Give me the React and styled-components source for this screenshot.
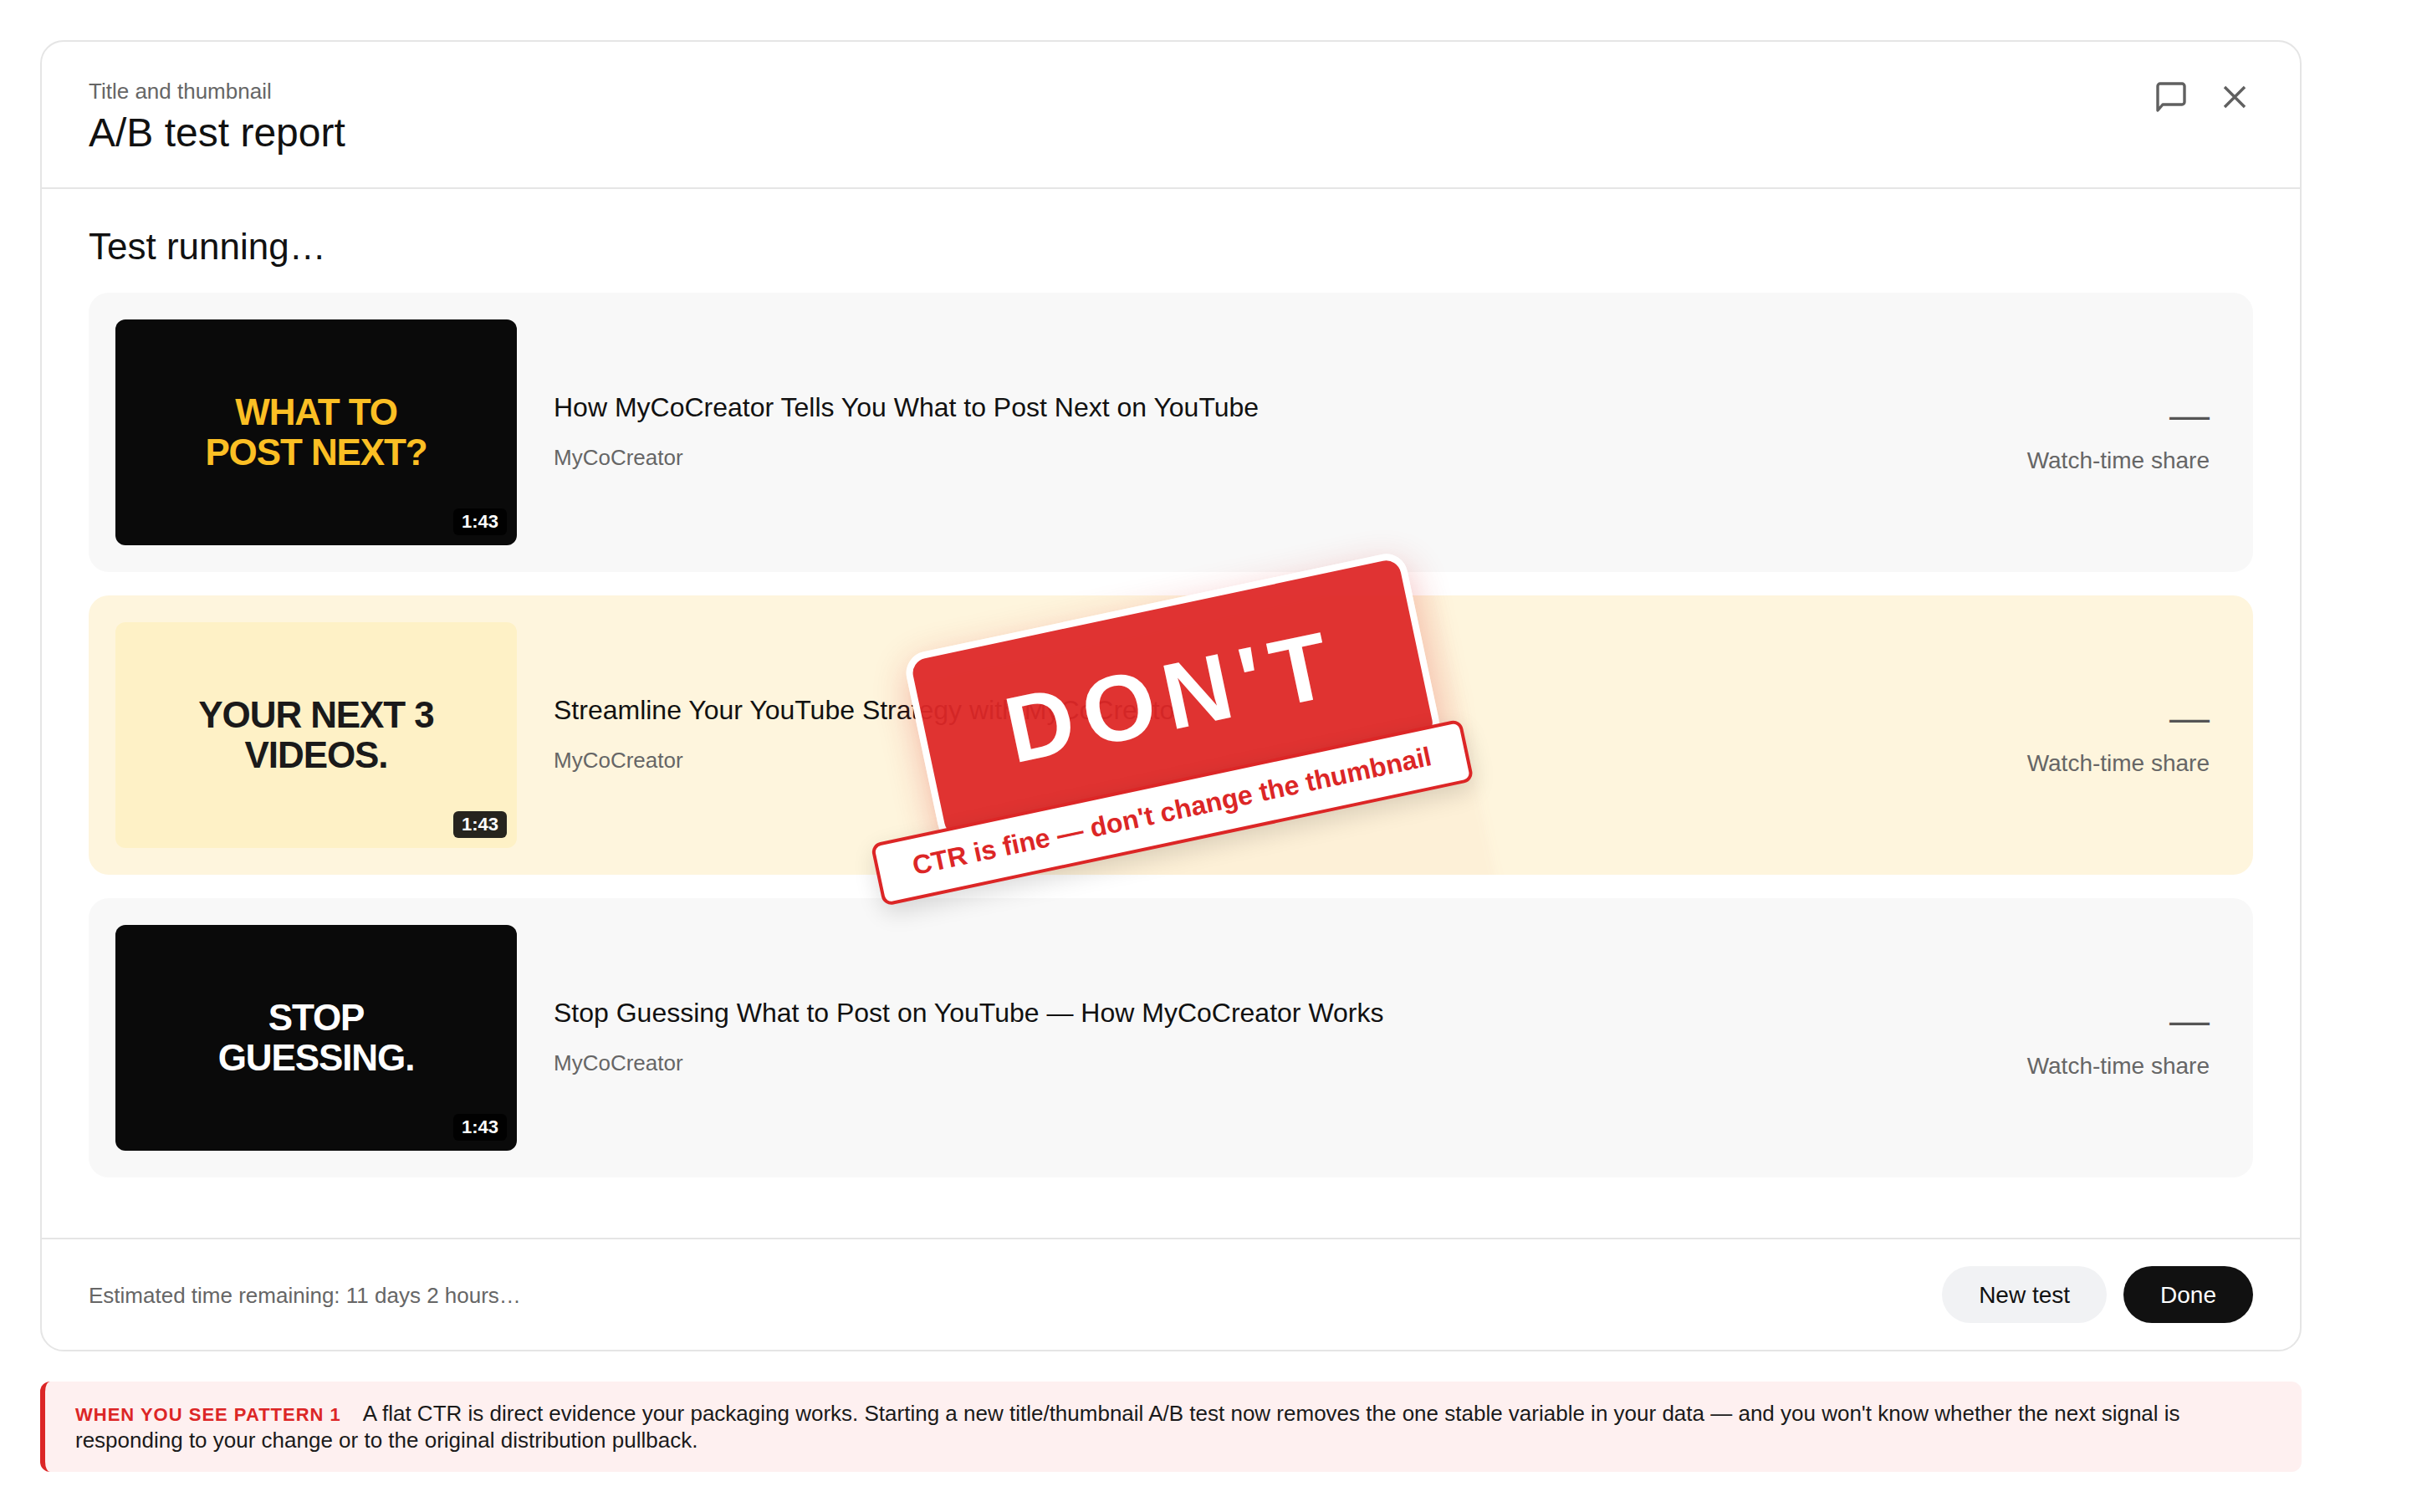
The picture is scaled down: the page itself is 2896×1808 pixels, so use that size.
import React from "react";
import styled, { createGlobalStyle } from "styled-components";

const GlobalStyle = createGlobalStyle`
  html, body {
    margin: 0;
    padding: 0;
    background: #fff;
    font-family: "Liberation Sans", Arial, sans-serif;
    color: #111;
  }
  * { box-sizing: border-box; }
`;

const Page = styled.div`
  width: 2896px;
  height: 1808px;
  padding: 48px 144px 48px 48px;
  display: flex;
  flex-direction: column;
  gap: 36px;
  overflow: hidden;
`;

const Card = styled.section`
  height: 1568px;
  border: 2px solid #e5e5e5;
  border-radius: 28px;
  display: flex;
  flex-direction: column;
  background: #fff;
`;

const Header = styled.header`
  height: 176px;
  flex: none;
  padding: 42px 56px 0;
  display: flex;
  justify-content: space-between;
  align-items: flex-start;
  border-bottom: 2px solid #e5e5e5;
`;

const Eyebrow = styled.div`
  font-size: 26px;
  line-height: 34px;
  color: #666;
`;

const Title = styled.h1`
  margin: 4px 0 0;
  font-size: 48px;
  line-height: 58px;
  font-weight: 400;
  color: #111;
`;

const HeaderActions = styled.div`
  display: flex;
  gap: 32px;
  align-items: center;
  margin-top: 2px;
  color: #606060;
`;

const IconButton = styled.button`
  width: 44px;
  height: 44px;
  padding: 0;
  border: 0;
  background: none;
  color: inherit;
  display: flex;
  align-items: center;
  justify-content: center;
`;

const Body = styled.main`
  flex: 1;
  padding: 41px 56px 0;
  display: flex;
  flex-direction: column;
`;

const SectionTitle = styled.h2`
  margin: 0 0 27px;
  font-size: 44px;
  line-height: 56px;
  font-weight: 400;
  color: #111;
`;

const Rows = styled.div`
  display: flex;
  flex-direction: column;
  gap: 28px;
  position: relative;
`;

const Row = styled.article`
  position: relative;
  height: 334px;
  padding: 32px 52px 32px 32px;
  border-radius: 24px;
  display: flex;
  align-items: center;
  gap: 44px;
  background: ${(p) => (p.$highlight ? "#fef5dd" : "#f8f8f8")};
`;

const GlowClip = styled.div`
  position: absolute;
  inset: 0;
  overflow: hidden;
  border-radius: 24px;
  pointer-events: none;
`;

const GlowShape = styled.div`
  position: absolute;
  left: 1018px;
  top: 40px;
  width: 640px;
  height: 420px;
  transform: rotate(-12deg);
  background: rgba(240, 110, 60, 0.035);
  filter: blur(6px);
`;

const Thumb = styled.div`
  position: relative;
  flex: none;
  width: 480px;
  height: 270px;
  border-radius: 12px;
  display: flex;
  align-items: center;
  justify-content: center;
  text-align: center;
  font-size: 44px;
  line-height: 48px;
  font-weight: 700;
  letter-spacing: -1.1px;
  background: ${(p) => p.$bg};
  color: ${(p) => p.$fg};
`;

const Duration = styled.span`
  position: absolute;
  right: 12px;
  bottom: 12px;
  padding: 3px 10px 4px;
  border-radius: 6px;
  background: rgba(0, 0, 0, 0.85);
  color: #fff;
  font-size: 22px;
  line-height: 25px;
  font-weight: 700;
  letter-spacing: 0;
`;

const Info = styled.div`
  position: relative;
  flex: 1;
  min-width: 0;
  padding-bottom: 2px;
`;

const VideoTitle = styled.div`
  font-size: 32px;
  line-height: 44px;
  color: #111;
`;

const Channel = styled.div`
  margin-top: 18px;
  font-size: 26px;
  line-height: 40px;
  color: #666;
`;

const Metric = styled.div`
  position: relative;
  flex: none;
  display: flex;
  flex-direction: column;
  align-items: flex-end;
  padding-top: 2px;
`;

const MetricValue = styled.div`
  font-size: 48px;
  line-height: 60px;
  color: #555;
`;

const MetricLabel = styled.div`
  margin-top: 6px;
  font-size: 28px;
  line-height: 36px;
  color: #666;
`;

const Stamp = styled.div`
  position: absolute;
  left: 996px;
  top: 368px;
  width: 612px;
  transform: rotate(-12deg);
  transform-origin: center center;
  z-index: 2;
`;

const StampCard = styled.div`
  height: 232px;
  padding-bottom: 4px;
  border: 8px solid #fff;
  border-radius: 26px;
  background: rgba(222, 40, 40, 0.95);
  color: #fff;
  display: flex;
  align-items: center;
  justify-content: center;
  font-size: 112px;
  font-weight: 700;
  letter-spacing: 12px;
  box-shadow: 0 14px 44px rgba(220, 38, 38, 0.3);
`;

const StampStrip = styled.div`
  width: 722px;
  height: 76px;
  margin: -20px 0 0 -84px;
  padding-bottom: 4px;
  position: relative;
  border: 4px solid #dc2626;
  border-radius: 12px;
  background: #fff;
  color: #dc2626;
  display: flex;
  align-items: center;
  justify-content: center;
  font-size: 32px;
  font-weight: 700;
  white-space: nowrap;
  box-shadow: 0 10px 28px rgba(0, 0, 0, 0.14);
`;

const Footer = styled.footer`
  flex: none;
  height: 134px;
  padding: 0 56px;
  border-top: 2px solid #e5e5e5;
  display: flex;
  align-items: center;
  justify-content: space-between;
`;

const Estimate = styled.div`
  padding-top: 2px;
  font-size: 26px;
  color: #666;
`;

const Buttons = styled.div`
  display: flex;
  gap: 20px;
`;

const Button = styled.button`
  height: 68px;
  padding: 1px 44px 0;
  border: 0;
  border-radius: 34px;
  font-family: inherit;
  font-size: 28px;
  background: ${(p) => (p.$primary ? "#111" : "#f1f2f4")};
  color: ${(p) => (p.$primary ? "#fff" : "#111")};
`;

const Note = styled.aside`
  height: 108px;
  padding: 23px 36px 0 36px;
  border-left: 6px solid #dc2626;
  border-radius: 12px;
  background: #fef0f0;
  font-size: 26px;
  line-height: 30px;
  color: #1a1a1a;
`;

const NoteLabel = styled.span`
  margin-right: 26px;
  font-size: 22px;
  font-weight: 700;
  letter-spacing: 1px;
  color: #dc2626;
`;

const videos = [
  {
    title: "How MyCoCreator Tells You What to Post Next on YouTube",
    thumb: ["WHAT TO", "POST NEXT?"],
    bg: "#0a0a0a",
    fg: "#fbbf24",
  },
  {
    title: "Streamline Your YouTube Strategy with MyCoCreator",
    thumb: ["YOUR NEXT 3", "VIDEOS."],
    bg: "#fef1c6",
    fg: "#1a1a1a",
    highlight: true,
  },
  {
    title: "Stop Guessing What to Post on YouTube — How MyCoCreator Works",
    thumb: ["STOP", "GUESSING."],
    bg: "#0a0a0a",
    fg: "#fff",
  },
];

export default function App() {
  return (
    <>
      <GlobalStyle />
      <Page>
        <Card>
          <Header>
            <div>
              <Eyebrow>Title and thumbnail</Eyebrow>
              <Title>A/B test report</Title>
            </div>
            <HeaderActions>
              <IconButton aria-label="Feedback">
                <svg width="44" height="44" viewBox="0 0 44 44" fill="none" stroke="currentColor" strokeWidth="3.4" strokeLinejoin="round">
                  <path d="M6 9a3 3 0 0 1 3-3h26a3 3 0 0 1 3 3v19a3 3 0 0 1-3 3H12l-6 7z" />
                </svg>
              </IconButton>
              <IconButton aria-label="Close">
                <svg width="44" height="44" viewBox="0 0 44 44" fill="none" stroke="currentColor" strokeWidth="3.4">
                  <path d="M10 10l24 24M34 10L10 34" />
                </svg>
              </IconButton>
            </HeaderActions>
          </Header>
          <Body>
            <SectionTitle>Test running…</SectionTitle>
            <Rows>
              {videos.map((v) => (
                <Row key={v.title} $highlight={v.highlight}>
                  {v.highlight && (
                    <GlowClip>
                      <GlowShape />
                    </GlowClip>
                  )}
                  <Thumb $bg={v.bg} $fg={v.fg}>
                    <div>
                      {v.thumb[0]}
                      <br />
                      {v.thumb[1]}
                    </div>
                    <Duration>1:43</Duration>
                  </Thumb>
                  <Info>
                    <VideoTitle>{v.title}</VideoTitle>
                    <Channel>MyCoCreator</Channel>
                  </Info>
                  <Metric>
                    <MetricValue>—</MetricValue>
                    <MetricLabel>Watch-time share</MetricLabel>
                  </Metric>
                </Row>
              ))}
              <Stamp>
                <StampCard>DON'T</StampCard>
                <StampStrip>CTR is fine — don't change the thumbnail</StampStrip>
              </Stamp>
            </Rows>
          </Body>
          <Footer>
            <Estimate>Estimated time remaining: 11 days 2 hours…</Estimate>
            <Buttons>
              <Button>New test</Button>
              <Button $primary>Done</Button>
            </Buttons>
          </Footer>
        </Card>
        <Note>
          <NoteLabel>WHEN YOU SEE PATTERN 1</NoteLabel>
          A flat CTR is direct evidence your packaging works. Starting a new title/thumbnail A/B test now removes the one stable variable in your data — and you won't know whether the next signal is responding to your change or to the original distribution pullback.
        </Note>
      </Page>
    </>
  );
}
